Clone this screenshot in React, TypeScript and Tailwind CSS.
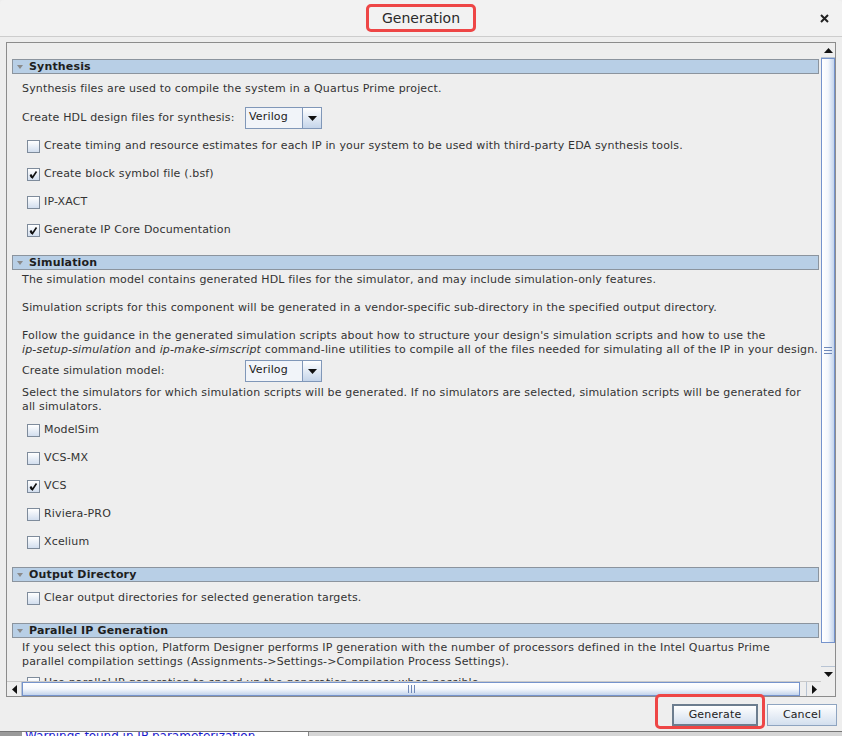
import React from "react";

type CheckProps = { checked?: boolean; label: string };

function Check({ checked, label }: CheckProps) {
  return (
    <div className="flex h-[28px] items-center pl-[15px]">
      <span className="flex h-[13px] w-[13px] shrink-0 items-center justify-center border border-[#7e8b9b] bg-gradient-to-b from-white to-[#d2deee]">
        {checked && (
          <svg width="9" height="9" viewBox="0 0 9 9">
            <path d="M1.5 4.5 L3.5 7.5 L7.5 1.5" fill="none" stroke="#111" strokeWidth="1.6" />
            <path d="M1.5 5 L3.2 7.6" stroke="#111" strokeWidth="2.2" />
          </svg>
        )}
      </span>
      <span className="ml-[4px] whitespace-nowrap">{label}</span>
    </div>
  );
}

function Header({ title }: { title: string }) {
  return (
    <div className="flex h-[15px] items-center border border-[#8b949e] bg-[#b8cfe6] font-bold text-[#1e1e1e]">
      <svg width="6" height="4" viewBox="0 0 6 4" className="ml-[4px] mr-[6px]">
        <path d="M0 0 H6 L3 4 Z" fill="#8a8a8a" />
      </svg>
      <span className="leading-none">{title}</span>
    </div>
  );
}

function Combo() {
  return (
    <div className="flex h-[22px] w-[77px] border border-[#8097b8]">
      <div className="flex flex-1 items-center bg-[#f1f4f9] pb-[2px] pl-[3px] text-[#222]">Verilog</div>
      <div className="flex w-[19px] items-center justify-center border-l border-[#8097b8] bg-gradient-to-b from-white to-[#c5d5ea]">
        <svg width="9" height="5" viewBox="0 0 9 5">
          <path d="M0 0 H9 L4.5 5 Z" fill="#111" />
        </svg>
      </div>
    </div>
  );
}

function Row({ label }: { label: string }) {
  return (
    <div className="flex items-center pl-[10px]">
      <span className="w-[223px] shrink-0 whitespace-nowrap">{label}</span>
      <Combo />
    </div>
  );
}

function Arrow({ dir }: { dir: "up" | "down" | "left" | "right" }) {
  const d = {
    up: "M0 5 H9 L4.5 0 Z",
    down: "M0 0 H9 L4.5 5 Z",
    left: "M5 0 V9 L0 4.5 Z",
    right: "M0 0 V9 L5 4.5 Z",
  }[dir];
  const vert = dir === "up" || dir === "down";
  return (
    <svg width={vert ? 9 : 5} height={vert ? 5 : 9} viewBox={vert ? "0 0 9 5" : "0 0 5 9"}>
      <path d={d} fill="#111" />
    </svg>
  );
}

export default function App() {
  return (
    <div className="flex h-[736px] w-[842px] flex-col overflow-hidden bg-[#eeeeee] font-['DejaVu_Sans','Liberation_Sans',sans-serif] text-[11px] leading-[14px] tracking-[0.16px] text-[#333]">
      {/* title bar */}
      <div className="relative flex h-[37px] shrink-0 items-center justify-center rounded-t-[4px] border-b border-[#cdcdcd] bg-[#f2f2f2]">
        <span className="rounded-[5px] border-[3px] border-[#ee4646] px-[13px] py-[3px] text-[14px] leading-[16px] font-medium tracking-normal text-[#2a2a2a]">
          Generation
        </span>
        <svg width="9" height="9" viewBox="0 0 9 9" className="absolute right-[13px] top-[14px]">
          <path d="M1 1 L8 8 M8 1 L1 8" stroke="#222" strokeWidth="2" />
        </svg>
      </div>

      {/* scroll pane */}
      <div className="ml-[6px] mt-[5px] grid h-[655px] w-[830px] shrink-0 grid-cols-[1fr_14px] grid-rows-[1fr_15px] border border-[#8c8c8c]">
        <div className="overflow-hidden pl-[5px] pr-[2px] pt-[16px]">
          <Header title="Synthesis" />
          <p className="mt-[8px] pl-[10px]">Synthesis files are used to compile the system in a Quartus Prime project.</p>
          <div className="mt-[11px]">
            <Row label="Create HDL design files for synthesis:" />
          </div>
          <div className="mt-[3px]">
            <Check label="Create timing and resource estimates for each IP in your system to be used with third-party EDA synthesis tools." />
            <Check checked label="Create block symbol file (.bsf)" />
            <Check label="IP-XACT" />
            <Check checked label="Generate IP Core Documentation" />
          </div>

          <div className="mt-[11px]">
            <Header title="Simulation" />
          </div>
          <div className="mt-[3px] pl-[10px]">
            <p>The simulation model contains generated HDL files for the simulator, and may include simulation-only features.</p>
            <p className="mt-[14px]">Simulation scripts for this component will be generated in a vendor-specific sub-directory in the specified output directory.</p>
            <p className="mt-[14px] whitespace-nowrap">
              Follow the guidance in the generated simulation scripts about how to structure your design's simulation scripts and how to use the
              <br />
              <i>ip-setup-simulation</i> and <i>ip-make-simscript</i> command-line utilities to compile all of the files needed for simulating all of the IP in your design.
            </p>
          </div>
          <div className="mt-[3px]">
            <Row label="Create simulation model:" />
          </div>
          <p className="mt-[4px] pl-[10px]">
            Select the simulators for which simulation scripts will be generated. If no simulators are selected, simulation scripts will be generated for
            <br />
            all simulators.
          </p>
          <div className="mt-[2px]">
            <Check label="ModelSim" />
            <Check label="VCS-MX" />
            <Check checked label="VCS" />
            <Check label="Riviera-PRO" />
            <Check label="Xcelium" />
          </div>

          <div className="mt-[11px]">
            <Header title="Output Directory" />
          </div>
          <div className="mt-[2px]">
            <Check label="Clear output directories for selected generation targets." />
          </div>

          <div className="mt-[11px]">
            <Header title="Parallel IP Generation" />
          </div>
          <p className="mt-[3px] pl-[10px]">
            If you select this option, Platform Designer performs IP generation with the number of processors defined in the Intel Quartus Prime
            <br />
            parallel compilation settings (Assignments-&gt;Settings-&gt;Compilation Process Settings).
          </p>
          <Check label="Use parallel IP generation to speed up the generation process when possible." />
        </div>

        {/* vertical scrollbar */}
        <div className="flex flex-col bg-[#eeeeee]">
          <div className="flex h-[15px] items-center justify-center border-b border-[#b8c4d4]">
            <Arrow dir="up" />
          </div>
          <div className="flex h-[585px] items-center justify-center border border-[#7593cc] bg-gradient-to-r from-white via-[#f4f7fc] to-[#c3d4ec]">
            <div className="flex w-[8px] flex-col gap-[2px]">
              <span className="h-px bg-[#6f88b8]" />
              <span className="h-px bg-[#6f88b8]" />
              <span className="h-px bg-[#6f88b8]" />
            </div>
          </div>
          <div className="flex-1" />
          <div className="flex h-[15px] items-center justify-center border-t border-[#b8c4d4]">
            <Arrow dir="down" />
          </div>
        </div>

        {/* horizontal scrollbar */}
        <div className="flex border-t border-[#c9c9c9] bg-[#eeeeee]">
          <div className="flex w-[15px] items-center justify-center border-r border-[#b8c4d4]">
            <Arrow dir="left" />
          </div>
          <div className="flex w-[778px] items-center justify-center border border-[#7593cc] bg-gradient-to-b from-white via-[#f4f7fc] to-[#c3d4ec]">
            <div className="flex h-[8px] flex-row gap-[2px]">
              <span className="w-px bg-[#6f88b8]" />
              <span className="w-px bg-[#6f88b8]" />
              <span className="w-px bg-[#6f88b8]" />
            </div>
          </div>
          <div className="flex-1" />
          <div className="flex w-[15px] items-center justify-center border-l border-[#b8c4d4]">
            <Arrow dir="right" />
          </div>
        </div>
        <div className="bg-[#eeeeee]" />
      </div>

      {/* buttons */}
      <div className="flex h-[34px] shrink-0 items-start justify-end gap-[9px] pr-[5px] pt-[7px]">
        <div className="relative">
          <button className="h-[22px] w-[86px] border-2 border-[#6c7d8f] bg-gradient-to-b from-white to-[#d3dfee] text-[11px] text-[#222]">
            Generate
          </button>
          <span className="pointer-events-none absolute left-[-17px] top-[-10px] h-[35px] w-[110px] rounded-[5px] border-[3px] border-[#ee4646]" />
        </div>
        <button className="h-[22px] w-[70px] border border-[#8ea4c0] bg-gradient-to-b from-white to-[#d3dfee] text-[11px] text-[#222]">
          Cancel
        </button>
      </div>

      {/* window behind */}
      <div className="flex h-[5px] shrink-0 border-t border-[#777]">
        <div className="w-[22px] bg-[#9a9a9a]" />
        <div className="w-[286px] overflow-hidden bg-white pl-[3px]">
          <div className="mt-[-2px] whitespace-nowrap text-[12px] leading-[12px] tracking-normal text-[#1a1acc]">Warnings found in IP parameterization</div>
        </div>
        <div className="w-px bg-[#888]" />
        <div className="flex-1 bg-[#d6d6d6]" />
      </div>
    </div>
  );
}
